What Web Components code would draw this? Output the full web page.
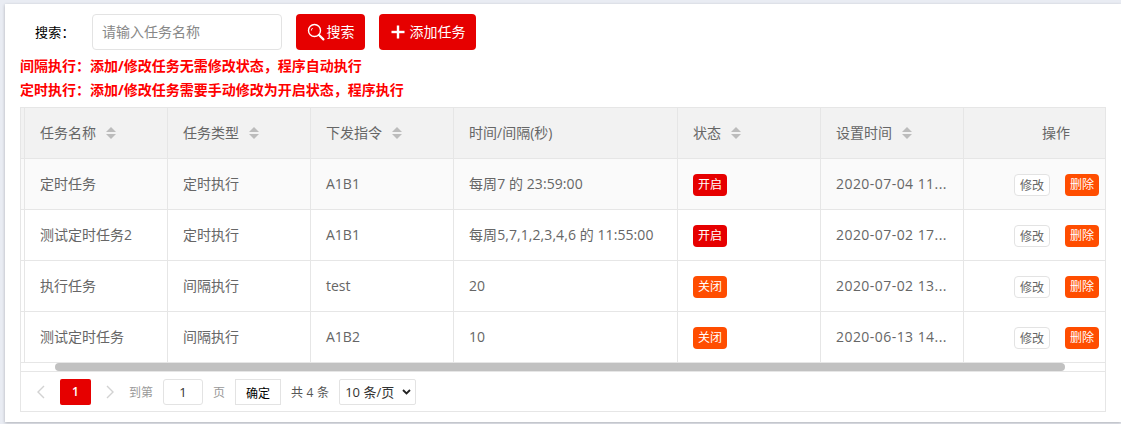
<!DOCTYPE html>
<html lang="zh">
<head>
<meta charset="utf-8">
<title>任务管理</title>
<style>
    html, body { margin: 0; padding: 0; height: 100%; background: #e9ecf3; overflow: hidden; }
    body { font-family: "Open Sans", "Noto Sans CJK SC", sans-serif; font-size: 14px; color: #666; }
</style>
</head>
<body>
<task-page></task-page>

<script>
class RedButton extends HTMLElement {
    constructor() {
        super();
        this.attachShadow({ mode: 'open' });
        this.shadowRoot.innerHTML = `
            <style>
                :host {
                    display: inline-flex;
                    align-items: center;
                    justify-content: center;
                    height: 36px;
                    background: #e60000;
                    color: #fff;
                    border-radius: 4px;
                    font-size: 14px;
                    gap: 2px;
                }
                .txt { padding-bottom: 2px; }
            </style>
            <slot name="icon"></slot>
            <span class="txt"><slot></slot></span>
        `;
    }
}
customElements.define('red-button', RedButton);

class SearchBar extends HTMLElement {
    constructor() {
        super();
        this.attachShadow({ mode: 'open' });
        this.shadowRoot.innerHTML = `
            <style>
                :host { display: flex; align-items: center; height: 36px; }
                .label { width: 57px; margin-left: 15px; color: #000; font-size: 13px; margin-top: -1px; letter-spacing: .2px; }
                .input {
                    box-sizing: border-box;
                    width: 190px;
                    height: 36px;
                    border: 1px solid #e3e3e3;
                    border-radius: 4px;
                    padding: 0 10px 0 9px;
                    color: #888;
                    line-height: 33px;
                    font-size: 14px;
                }
                red-button.search { width: 69px; margin-left: 14px; }
                red-button.add { width: 97px; margin-left: 14px; gap: 5px; padding-left: 1px; box-sizing: border-box; }
                svg { display: block; }
            </style>
            <span class="label">搜索：</span>
            <div class="input">请输入任务名称</div>
            <red-button class="search">
                <svg slot="icon" width="18" height="18" viewBox="0 0 18 18" fill="none" stroke="#fff">
                    <circle cx="7.5" cy="7.5" r="6" stroke-width="1.4"/>
                    <path d="M4.4 7.5a3.2 3.2 0 0 1 1.2-2.5" stroke-width="1"/>
                    <path d="M12 12l4.4 4.4" stroke-width="2.2" stroke-linecap="round"/>
                </svg>
                搜索
            </red-button>
            <red-button class="add">
                <svg slot="icon" width="14" height="14" viewBox="0 0 14 14" fill="#fff">
                    <rect x="0.5" y="5.8" width="13" height="2.4"/>
                    <rect x="5.8" y="0.5" width="2.4" height="13"/>
                </svg>
                添加任务
            </red-button>
        `;
    }
}
customElements.define('search-bar', SearchBar);

class SortIcon extends HTMLElement {
    constructor() {
        super();
        this.attachShadow({ mode: 'open' });
        this.shadowRoot.innerHTML = `
            <style>
                :host { display: inline-block; width: 10px; height: 12px; margin: 2px 0 0 10px; }
                svg { display: block; }
            </style>
            <svg width="10" height="12" viewBox="0 0 10 12" fill="#bcbcbc">
                <path d="M5 0l5 5H0z"/>
                <path d="M0 7h10l-5 5z"/>
            </svg>
        `;
    }
}
customElements.define('sort-icon', SortIcon);

class TaskTag extends HTMLElement {
    constructor() {
        super();
        this.attachShadow({ mode: 'open' });
        this.shadowRoot.innerHTML = `
            <style>
                :host {
                    display: inline-block;
                    flex: none;
                    width: 34px;
                    height: 22px;
                    line-height: 21px;
                    margin-top: 4px;
                    text-align: center;
                    border-radius: 4px;
                    font-size: 12px;
                    color: #fff;
                    background: #ff4d00;
                }
                :host([on]) { background: #e60000; }
                :host([plain]) {
                    box-sizing: border-box;
                    width: 36px;
                    line-height: 21px;
                    background: #fff;
                    color: #666;
                    border: 1px solid #e3e3e3;
                }
            </style>
            <slot></slot>
        `;
    }
}
customElements.define('task-tag', TaskTag);

const COLS = '143px 143px 143px 224px 143px 143px 141px';

class TaskRow extends HTMLElement {
    constructor() {
        super();
        this.attachShadow({ mode: 'open' });
    }

    connectedCallback() {
        const d = JSON.parse(this.getAttribute('data'));
        const tag = d.on ? '<task-tag on>开启</task-tag>' : '<task-tag>关闭</task-tag>';
        this.shadowRoot.innerHTML = `
            <style>
                :host {
                    display: grid;
                    grid-template-columns: ${COLS};
                    height: 51px;
                    box-sizing: border-box;
                    border-bottom: 1px solid #e6e6e6;
                    font-size: 14px;
                    color: #666;
                }
                :host([stripe]) { background: #fafafa; }
                .c {
                    box-sizing: border-box;
                    display: flex;
                    align-items: center;
                    padding: 0 0 2px 15px;
                    border-right: 1px solid #e6e6e6;
                    white-space: nowrap;
                    overflow: hidden;
                }
                .c.date { letter-spacing: .45px; }
                .c.time { letter-spacing: .08px; }
                .c:last-child { border-right: 0; padding: 0 6px 2px 0; justify-content: flex-end; gap: 15px; }
            </style>
            <div class="c">${d.name}</div>
            <div class="c">${d.type}</div>
            <div class="c">${d.cmd}</div>
            <div class="c time">${d.time}</div>
            <div class="c">${tag}</div>
            <div class="c date">${d.set}</div>
            <div class="c"><task-tag plain>修改</task-tag><task-tag>删除</task-tag></div>
        `;
    }
}
customElements.define('task-row', TaskRow);

class TaskHead extends HTMLElement {
    constructor() {
        super();
        this.attachShadow({ mode: 'open' });
        const names = ['任务名称', '任务类型', '下发指令', '时间/间隔(秒)', '状态', '设置时间'];
        const sortable = [true, true, true, false, true, true];
        const cells = names.map((n, i) =>
            `<div class="c">${n}${sortable[i] ? '<sort-icon></sort-icon>' : ''}</div>`).join('');
        this.shadowRoot.innerHTML = `
            <style>
                :host {
                    display: grid;
                    grid-template-columns: ${COLS};
                    height: 51px;
                    box-sizing: border-box;
                    background: #f2f2f2;
                    border-bottom: 1px solid #e6e6e6;
                    font-size: 14px;
                    color: #666;
                }
                .c {
                    box-sizing: border-box;
                    display: flex;
                    align-items: center;
                    padding: 0 0 2px 15px;
                    border-right: 1px solid #e6e6e6;
                }
                .c.op { border-right: 0; padding: 0 0 2px 78px; }
            </style>
            ${cells}
            <div class="c op">操作</div>
        `;
    }
}
customElements.define('task-head', TaskHead);

class TaskTable extends HTMLElement {
    constructor() {
        super();
        this.attachShadow({ mode: 'open' });
        this.shadowRoot.innerHTML = `
            <style>
                :host { display: block; box-sizing: border-box; width: 1086px; border: 1px solid #e6e6e6; }
                .body { display: flex; }
                .stub { flex: none; width: 3px; border-right: 1px solid #e6e6e6; }
                .rows { flex: 1; }
                .stub-head { height: 50px; background: #f2f2f2; border-bottom: 1px solid #e6e6e6; }
                .stub-row { height: 50px; border-bottom: 1px solid #e6e6e6; }
                .stub-row.s { background: #fafafa; }
                .track {
                    height: 8px;
                    padding-left: 34px;
                    border-bottom: 1px solid #e6e6e6;
                }
                .thumb { width: 1010px; height: 8px; background: #c1c1c1; border-radius: 4px; }
            </style>
            <div class="body">
                <div class="stub">
                    <div class="stub-head"></div>
                    <div class="stub-row s"></div>
                    <div class="stub-row"></div>
                    <div class="stub-row"></div>
                    <div class="stub-row"></div>
                </div>
                <div class="rows">
                    <task-head></task-head>
                    <slot></slot>
                </div>
            </div>
            <div class="track"><div class="thumb"></div></div>
            <task-pager></task-pager>
        `;
    }
}
customElements.define('task-table', TaskTable);

class TaskPager extends HTMLElement {
    constructor() {
        super();
        this.attachShadow({ mode: 'open' });
        this.shadowRoot.innerHTML = `
            <style>
                :host {
                    display: flex;
                    align-items: center;
                    height: 39px;
                    padding-left: 15px;
                    font-size: 12px;
                    color: #999;
                }
                svg { display: block; }
                .cur {
                    width: 31px; height: 26px; line-height: 26px; margin-left: 14px;
                    background: #e60000; color: #fff; text-align: center; border-radius: 2px; font-weight: 600;
                }
                .next { margin-left: 14px; }
                .to { margin-left: 14px; }
                .box {
                    box-sizing: border-box;
                    height: 26px;
                    line-height: 24px;
                    border: 1px solid #e3e3e3;
                    text-align: center;
                    color: #333;
                }
                .num { width: 40px; margin-left: 10px; border-radius: 3px; font-size: 13px; }
                .page { margin-left: 10px; }
                .ok { width: 46px; margin-left: 10px; color: #000; line-height: 27px; }
                .total { margin-left: 10px; color: #555; letter-spacing: .2px; }
                .size {
                    display: flex; align-items: center; justify-content: space-between;
                    width: 77px; margin-left: 10px; padding: 0 4px 0 5px; border-radius: 2px; color: #333; font-size: 13px;
                }
            </style>
            <svg width="10" height="14" viewBox="0 0 10 14" fill="none" stroke="#d2d2d2" stroke-width="1.4"><path d="M8 1L2 7l6 6"/></svg>
            <span class="cur">1</span>
            <svg class="next" width="10" height="14" viewBox="0 0 10 14" fill="none" stroke="#d2d2d2" stroke-width="1.4"><path d="M2 1l6 6-6 6"/></svg>
            <span class="to">到第</span>
            <div class="box num">1</div>
            <span class="page">页</span>
            <div class="box ok">确定</div>
            <span class="total">共 4 条</span>
            <div class="box size"><span>10 条/页</span>
                <svg width="9" height="6" viewBox="0 0 9 6" fill="none" stroke="#222" stroke-width="1.8"><path d="M1 1l3.5 3.5L8 1"/></svg>
            </div>
        `;
    }
}
customElements.define('task-pager', TaskPager);

class TaskPage extends HTMLElement {
    constructor() {
        super();
        this.attachShadow({ mode: 'open' });
        const rows = [
            { name: '定时任务', type: '定时执行', cmd: 'A1B1', time: '每周7 的 23:59:00', on: true, set: '2020-07-04 11...' },
            { name: '测试定时任务2', type: '定时执行', cmd: 'A1B1', time: '每周5,7,1,2,3,4,6 的 11:55:00', on: true, set: '2020-07-02 17...' },
            { name: '执行任务', type: '间隔执行', cmd: 'test', time: '20', on: false, set: '2020-07-02 13...' },
            { name: '测试定时任务', type: '间隔执行', cmd: 'A1B2', time: '10', on: false, set: '2020-06-13 14...' }
        ];
        const rowHtml = rows.map((r, i) =>
            `<task-row ${i === 0 ? 'stripe' : ''} data='${JSON.stringify(r)}'></task-row>`).join('');
        this.shadowRoot.innerHTML = `
            <style>
                :host {
                    display: block;
                    box-sizing: border-box;
                    margin: 4px 0 0 5px;
                    height: 418px;
                    padding: 10px 0 0 15px;
                    background: #fff;
                    box-shadow: 0 1px 3px rgba(0, 0, 0, .25);
                }
                .note {
                    color: #f00;
                    font-size: 14px;
                    font-weight: 700;
                    line-height: 24px;
                }
                .notes { margin-top: 4px; margin-bottom: 5px; }
            </style>
            <search-bar></search-bar>
            <div class="notes">
                <div class="note">间隔执行：添加/修改任务无需修改状态，程序自动执行</div>
                <div class="note">定时执行：添加/修改任务需要手动修改为开启状态，程序执行</div>
            </div>
            <task-table>${rowHtml}</task-table>
        `;
    }
}
customElements.define('task-page', TaskPage);
</script>
</body>
</html>
